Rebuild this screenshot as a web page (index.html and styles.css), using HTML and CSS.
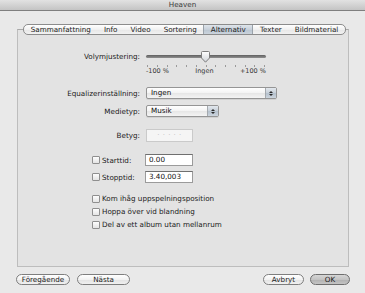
FILE: index.html
```html
<!DOCTYPE html>
<html>
<head>
<meta charset="utf-8">
<link rel="stylesheet" href="styles.css">
</head>
<body>
<div class="window">
  <div class="titlebar">Heaven</div>
  <div class="content">
    <div class="tabs">
      <div class="tab">Sammanfattning</div>
      <div class="tab">Info</div>
      <div class="tab">Video</div>
      <div class="tab">Sortering</div>
      <div class="tab selected">Alternativ</div>
      <div class="tab">Texter</div>
      <div class="tab">Bildmaterial</div>
    </div>
    <div class="panel">
      <div class="row slider-row">
        <div class="label">Volymjustering:</div>
        <div class="slider">
          <div class="track-area">
            <div class="track"></div>
            <svg class="thumb" width="9" height="12" viewBox="0 0 9 12">
              <defs>
                <linearGradient id="tg" x1="0" y1="0" x2="0" y2="1">
                  <stop offset="0" stop-color="#ffffff"/>
                  <stop offset="1" stop-color="#cfd3d8"/>
                </linearGradient>
              </defs>
              <path d="M1.5 0.5 H7.5 Q8.5 0.5 8.5 1.5 V7 L4.5 11.2 L0.5 7 V1.5 Q0.5 0.5 1.5 0.5 Z" fill="url(#tg)" stroke="#7d7d7d" stroke-width="1"/>
            </svg>
          </div>
          <div class="ticks">
            <span></span><span></span><span></span><span></span><span></span><span></span><span></span><span></span><span></span><span></span><span></span><span></span><span></span>
          </div>
          <div class="scale">
            <span>-100 %</span><span>Ingen</span><span>+100 %</span>
          </div>
        </div>
      </div>
      <div class="row eq-row">
        <div class="label">Equalizerinställning:</div>
        <div class="popup wide"><span class="popup-text">Ingen</span><span class="arrows"><i class="up"></i><i class="down"></i></span></div>
      </div>
      <div class="row media-row">
        <div class="label">Medietyp:</div>
        <div class="popup narrow"><span class="popup-text">Musik</span><span class="arrows"><i class="up"></i><i class="down"></i></span></div>
      </div>
      <div class="row rating-row">
        <div class="label">Betyg:</div>
        <div class="rating">· · · · ·</div>
      </div>
      <div class="row time-row first-time">
        <div class="check-label"><span class="checkbox"></span>Starttid:</div>
        <div class="field">0.00</div>
      </div>
      <div class="row time-row">
        <div class="check-label"><span class="checkbox"></span>Stopptid:</div>
        <div class="field">3.40,003</div>
      </div>
      <div class="options">
        <div class="option"><span class="checkbox"></span>Kom ihåg uppspelningsposition</div>
        <div class="option"><span class="checkbox"></span>Hoppa över vid blandning</div>
        <div class="option"><span class="checkbox"></span>Del av ett album utan mellanrum</div>
      </div>
    </div>
    <div class="buttons">
      <div class="group">
        <div class="btn prev">Föregående</div>
        <div class="btn next">Nästa</div>
      </div>
      <div class="group right">
        <div class="btn cancel">Avbryt</div>
        <div class="btn ok">OK</div>
      </div>
    </div>
  </div>
</div>
</body>
</html>
```
FILE: styles.css
```css
* { box-sizing: border-box; }
html, body {
  margin: 0;
  padding: 0;
}
body {
  width: 365px;
  height: 293px;
  overflow: hidden;
  background: #e9e9e9;
  font-family: "DejaVu Sans", "Liberation Sans", sans-serif;
  font-size: 7.2px;
  color: #1a1a1a;
}
.window {
  width: 365px;
  height: 293px;
  display: flex;
  flex-direction: column;
}
.titlebar {
  height: 11px;
  line-height: 10px;
  text-align: center;
  color: #3a3a3a;
  background: linear-gradient(#e2e2e2, #c4c4c4);
  border-bottom: 1px solid #7f7f7f;
}
.content {
  padding: 0 15px 0 16px;
  display: flex;
  flex-direction: column;
}
.tabs {
  position: relative;
  z-index: 1;
  align-self: center;
  margin-top: 13px;
  margin-left: 3px;
  height: 11px;
  display: flex;
  border: 1px solid #8c8c8c;
  border-radius: 5px;
  overflow: hidden;
  background: linear-gradient(#ffffff, #f1f1f1 50%, #e6e6e6 51%, #f2f2f2);
}
.tab {
  height: 9px;
  line-height: 9px;
  padding: 0 6.5px;
  color: #1c1c1c;
}
.tab.selected {
  background: linear-gradient(#dfe5eb, #c7d0da 50%, #b9c4cf 51%, #cbd4dd);
  border-left: 1px solid #9aa2aa;
  border-right: 1px solid #9aa2aa;
}
.panel {
  margin-top: -6px;
  margin-left: 1px;
  width: 332px;
  height: 238px;
  border: 1px solid #bdbdbd;
  border-top-color: #a9a9a9;
  background: #e3e3e3;
  display: flex;
  flex-direction: column;
}
.row {
  display: flex;
  align-items: center;
  gap: 6px;
}
.label {
  width: 122px;
  text-align: right;
  flex: none;
}
.slider-row {
  margin-top: 21px;
  align-items: flex-start;
}
.slider-row .label {
  height: 12px;
  line-height: 12px;
}
.slider {
  width: 120px;
  display: flex;
  flex-direction: column;
}
.track-area {
  position: relative;
  height: 12px;
}
.track {
  position: absolute;
  left: 0;
  right: 0;
  top: 4px;
  height: 3px;
  border-radius: 2px;
  background: linear-gradient(#5f5f5f, #8f8f8f);
}
.thumb {
  position: absolute;
  left: 55px;
  top: 0;
}
.ticks {
  margin-top: 2px;
  height: 2px;
  display: flex;
  justify-content: space-between;
  padding: 0 1px;
}
.ticks span {
  width: 1px;
  height: 2px;
  background: #9a9a9a;
}
.scale {
  height: 8px;
  line-height: 8px;
  display: flex;
  justify-content: space-between;
  font-size: 6.5px;
  color: #333;
}
.eq-row { margin-top: 12px; height: 12px; }
.media-row { margin-top: 6px; height: 12px; }
.popup {
  height: 12px;
  display: flex;
  border: 1px solid #959595;
  border-radius: 2px;
  background: linear-gradient(#ffffff, #f3f3f3 50%, #e6e6e6 51%, #f4f4f4);
  box-shadow: 0 1px 0 rgba(0,0,0,0.08);
}
.popup.wide { width: 131px; }
.popup.narrow { width: 73px; }
.popup-text {
  flex: 1;
  line-height: 10px;
  padding-left: 4px;
  color: #111;
}
.arrows {
  width: 11px;
  border-left: 1px solid #a4a9ae;
  background: linear-gradient(#e3e8ee, #c6cfd8 50%, #b4c0cc 51%, #ccd5de);
  display: flex;
  flex-direction: column;
  align-items: center;
  justify-content: center;
  gap: 1px;
}
.arrows i {
  width: 0;
  height: 0;
  border-left: 2px solid transparent;
  border-right: 2px solid transparent;
}
.arrows .up { border-bottom: 2px solid #2a2a2a; }
.arrows .down { border-top: 2px solid #2a2a2a; }
.rating-row { margin-top: 12px; height: 13px; }
.rating {
  width: 47px;
  height: 13px;
  border: 1px solid #cacaca;
  background: #f5f5f5;
  color: #c2c2c2;
  line-height: 11px;
  text-align: center;
  font-size: 7px;
  letter-spacing: 0.5px;
}
.time-row { margin-top: 5px; height: 12px; gap: 5px; }
.time-row.first-time { margin-top: 12px; }
.check-label {
  width: 122px;
  padding-left: 74px;
  display: flex;
  align-items: center;
  flex: none;
}
.checkbox {
  width: 8px;
  height: 8px;
  flex: none;
  margin-right: 2px;
  border: 1px solid #8f8f8f;
  border-radius: 1px;
  background: linear-gradient(#fdfdfd, #e4e4e4);
}
.field {
  width: 48px;
  height: 12px;
  line-height: 10px;
  padding-left: 3px;
  border: 1px solid #9b9b9b;
  border-top-color: #6f6f6f;
  background: #ffffff;
  color: #111;
}
.options {
  margin-top: 9px;
  padding-left: 74px;
  display: flex;
  flex-direction: column;
}
.option {
  height: 13px;
  display: flex;
  align-items: center;
}
.buttons {
  margin-top: 7px;
  display: flex;
  justify-content: space-between;
}
.group {
  display: flex;
  gap: 7px;
}
.group.right { gap: 6px; }
.btn {
  height: 11px;
  line-height: 9px;
  text-align: center;
  border: 1px solid #7e7e7e;
  border-radius: 6px;
  background: linear-gradient(#ffffff, #f2f2f2 50%, #e2e2e2 51%, #f0f0f0);
  color: #1a1a1a;
}
.btn.prev { width: 54px; }
.btn.next { width: 53px; }
.btn.cancel { width: 41px; }
.btn.ok {
  width: 40px;
  background: linear-gradient(#d6d6d6, #c3c3c3 50%, #b0b0b0 51%, #c4c4c4);
  border-color: #6e6e6e;
}
```
